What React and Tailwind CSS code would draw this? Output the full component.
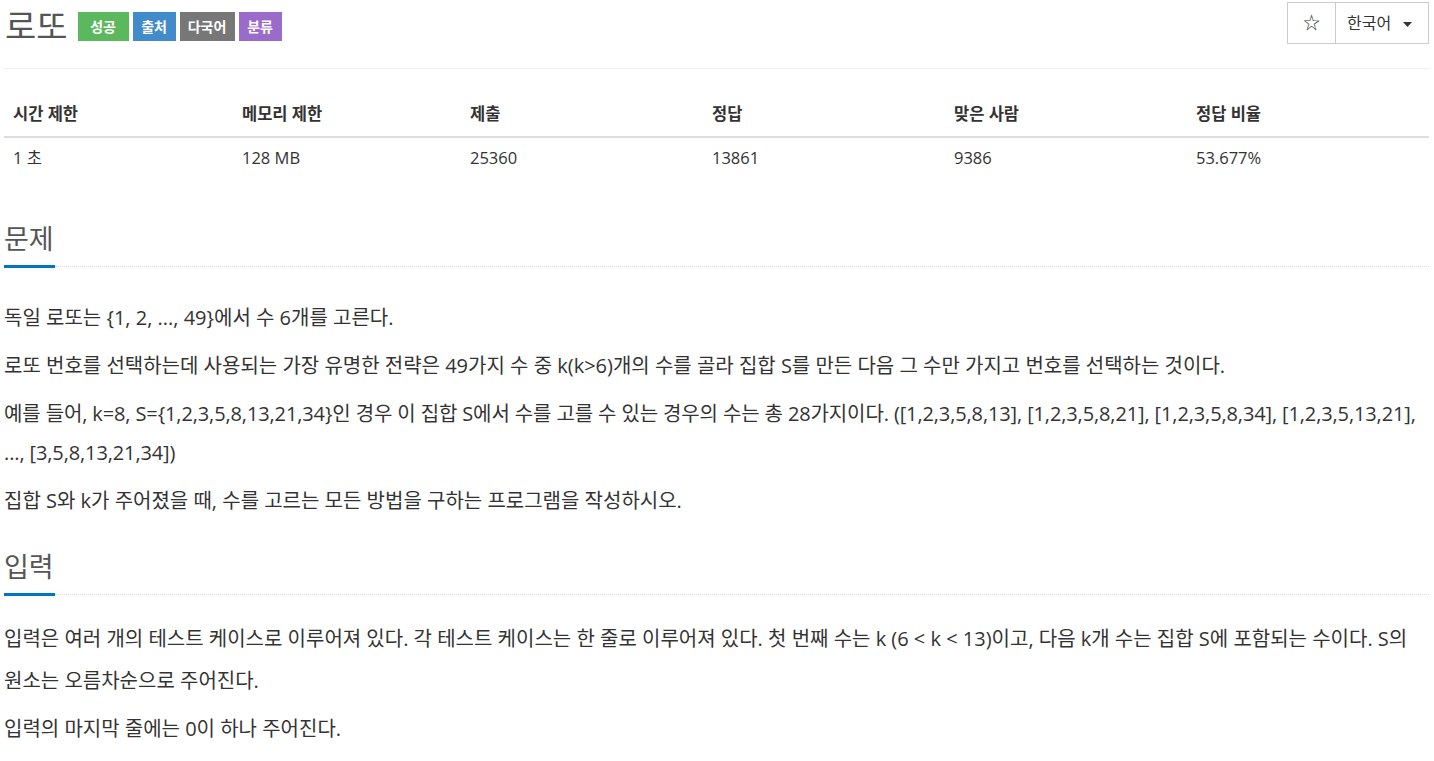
const stats = [
  { label: "시간 제한", value: "1 초", w: "w-[229px]" },
  { label: "메모리 제한", value: "128 MB", w: "w-[228px]" },
  { label: "제출", value: "25360", w: "w-[242px]" },
  { label: "정답", value: "13861", w: "w-[242px]" },
  { label: "맞은 사람", value: "9386", w: "w-[242px]" },
  { label: "정답 비율", value: "53.677%", w: "" },
];

const labels = [
  { text: "성공", cls: "bg-[#5cb85c] w-[51px]" },
  { text: "출처", cls: "bg-[#428bca] w-[43px]" },
  { text: "다국어", cls: "bg-[#777777] w-[55px]" },
  { text: "분류", cls: "bg-[#9b6bcc] w-[43px]" },
];

function SectionTitle({ children }) {
  return (
    <div>
      <h2 className="text-[27px] leading-[34px] text-[#555] font-normal">{children}</h2>
      <div className="mt-[9px] flex items-center">
        <div className="w-[51px] h-[3px] bg-[#0076c0]" />
        <div className="flex-1 border-b border-dotted border-[#d8dce4]" />
      </div>
    </div>
  );
}

export default function App() {
  return (
    <div className="min-h-screen bg-white pl-[4px] pr-[5px] text-[#333] font-['Open_Sans','Noto_Sans_CJK_KR',sans-serif]">
      {/* header */}
      <div className="flex items-start justify-between border-b border-[#eee] h-[69px]">
        <div className="flex items-center pt-[10px]">
          <h1 className="text-[34px] leading-[30px] text-[#555] font-normal mr-[10px] ml-[1px]">로또</h1>
          <div className="flex gap-[4px] mt-[2px]">
            {labels.map((l) => (
              <span
                key={l.text}
                className={`${l.cls} h-[29px] flex items-center justify-center text-white text-[14px] font-bold`}
              >
                {l.text}
              </span>
            ))}
          </div>
        </div>
        <div className="flex mt-[2px] h-[42px] border border-[#ccc] text-[16px]">
          <button className="w-[48px] flex items-center justify-center border-r border-[#ccc] text-[17px] text-[#333]">
            ☆
          </button>
          <button className="w-[92px] flex items-center pl-[11px] gap-[12px] text-[#333]">
            <span>한국어</span>
            <svg width="9" height="5" viewBox="0 0 9 5" className="mt-[2px]">
              <path d="M0 0 L9 0 L4.5 5 Z" fill="#333" />
            </svg>
          </button>
        </div>
      </div>

      {/* stats table */}
      <table className="w-full mt-[22px] text-[16.5px] border-collapse">
        <thead>
          <tr className="border-b-2 border-[#ddd]">
            {stats.map((s) => (
              <th key={s.label} className={`${s.w} text-left font-bold px-[9px] pt-[12px] pb-[11px] leading-[22px]`}>
                {s.label}
              </th>
            ))}
          </tr>
        </thead>
        <tbody>
          <tr>
            {stats.map((s) => (
              <td key={s.label} className="px-[9px] py-[9px] leading-[22px]">
                {s.value}
              </td>
            ))}
          </tr>
        </tbody>
      </table>

      {/* 문제 */}
      <section className="mt-[44px]">
        <SectionTitle>문제</SectionTitle>
        <div className="mt-[30px] text-[20px] leading-[39px]">
          <p className="mb-[9px]">독일 로또는 {"{"}1, 2, ..., 49{"}"}에서 수 6개를 고른다.</p>
          <p className="mb-[9px]">
            로또 번호를 선택하는데 사용되는 가장 유명한 전략은 49가지 수 중 k(k&gt;6)개의 수를 골라 집합 S를 만든 다음 그 수만 가지고 번호를 선택하는 것이다.
          </p>
          <p className="mb-[9px] tracking-[-0.12px] -mr-[5px]">
            예를 들어, k=8, S={"{"}1,2,3,5,8,13,21,34{"}"}인 경우 이 집합 S에서 수를 고를 수 있는 경우의 수는 총 28가지이다. ([1,2,3,5,8,13], [1,2,3,5,8,21], [1,2,3,5,8,34], [1,2,3,5,13,21], ..., [3,5,8,13,21,34])
          </p>
          <p className="mb-[9px]">집합 S와 k가 주어졌을 때, 수를 고르는 모든 방법을 구하는 프로그램을 작성하시오.</p>
        </div>
      </section>

      {/* 입력 */}
      <section className="mt-[30px]">
        <SectionTitle>입력</SectionTitle>
        <div className="mt-[22px] text-[20px] leading-[42px]">
          <p className="mb-[6px]">
            입력은 여러 개의 테스트 케이스로 이루어져 있다. 각 테스트 케이스는 한 줄로 이루어져 있다. 첫 번째 수는 k (6 &lt; k &lt; 13)이고, 다음 k개 수는 집합 S에 포함되는 수이다. S의 원소는 오름차순으로 주어진다.
          </p>
          <p className="mb-[6px]">입력의 마지막 줄에는 0이 하나 주어진다.</p>
        </div>
      </section>
    </div>
  );
}
